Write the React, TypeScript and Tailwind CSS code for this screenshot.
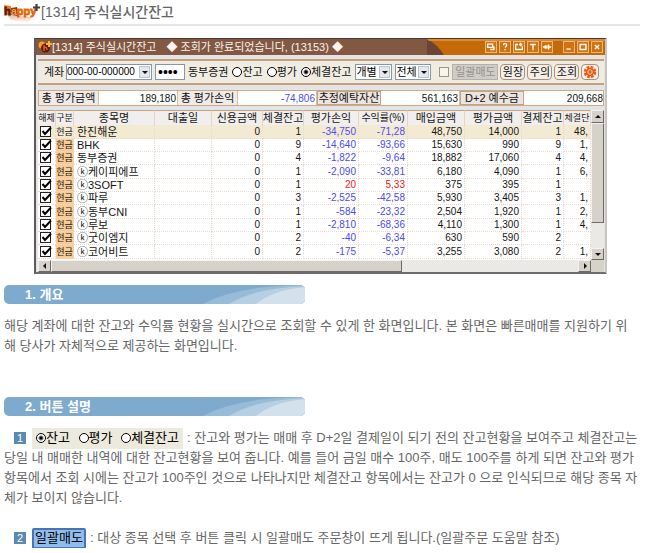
import React from 'react';

const SANS = "font-['Liberation_Sans','Noto_Sans_CJK_KR',sans-serif]";

type Row = [string, string, string, string, string, string, string, string, string];

const rows: Row[] = [
  ['한진해운', '0', '1', '-34,750', '-71,28', '48,750', '14,000', '1', '48,'],
  ['BHK', '0', '9', '-14,640', '-93,66', '15,630', '990', '9', '1,'],
  ['동부증권', '0', '4', '-1,822', '-9,64', '18,882', '17,060', '4', '4,'],
  ['ⓚ케이피에프', '0', '1', '-2,090', '-33,81', '6,180', '4,090', '1', '6,'],
  ['ⓚ3SOFT', '0', '1', '20', '5,33', '375', '395', '1', ''],
  ['ⓚ파루', '0', '3', '-2,525', '-42,58', '5,930', '3,405', '3', '1,'],
  ['ⓚ동부CNI', '0', '1', '-584', '-23,32', '2,504', '1,920', '1', '2,'],
  ['ⓚ루보', '0', '1', '-2,810', '-68,36', '4,110', '1,300', '1', '4,'],
  ['ⓚ굿이엠지', '0', '2', '-40', '-6,34', '630', '590', '2', ''],
  ['ⓚ코어비트', '0', '2', '-175', '-5,37', '3,255', '3,080', '2', '1,'],
];

const headers = ['해제', '구분', '종목명', '대출일', '신용금액', '체결잔고', '평가손익', '수익률(%)', '매입금액', '평가금액', '결제잔고', '체결단'];

function HappyLogo() {
  return (
    <svg width="37" height="24" viewBox="0 0 37 24" aria-hidden="true">
      <defs>
        <linearGradient id="hp" x1="0" y1="0" x2="0" y2="1">
          <stop offset="0" stopColor="#ff9a1c" />
          <stop offset="1" stopColor="#d95200" />
        </linearGradient>
        <linearGradient id="fade" x1="0" y1="0" x2="0" y2="1">
          <stop offset="0" stopColor="#e9b7a2" />
          <stop offset="1" stopColor="#ffffff" />
        </linearGradient>
      </defs>
      <path d="M3 15 L28 17 L24 23 L7 20 Z" fill="url(#fade)" />
      <path d="M0 5l7 1v10l-6-2z" fill="#f07d1c" />
      <path d="M7 8l6-1 1 9-7-1z" fill="#8a3a14" />
      <text x="0" y="15" fontFamily="Liberation Sans" fontWeight="700" fontSize="11" fill="#ee7410" stroke="#e06408" strokeWidth="0.8">
        <tspan fill="#5a1c10" stroke="#5a1c10">h</tspan>
        <tspan fill="#f5a05a" stroke="none">a</tspan>
        <tspan fill="url(#hp)">ppy</tspan>
      </text>
      <path d="M32.500 4v7M29 7.500h7" stroke="#4a3a34" strokeWidth="2.200" />
    </svg>
  );
}

function MiniLogo() {
  return (
    <svg width="14" height="14" viewBox="0 0 14 14" aria-hidden="true">
      <circle cx="4" cy="5" r="3.500" fill="#f9a01b" />
      <circle cx="7.500" cy="8" r="4.500" fill="#5d1c0b" />
      <path d="M6 5v6M6 8q3-2 3 2" stroke="#e8591c" strokeWidth="1.500" fill="none" />
      <path d="M11 1v6M8 4h6" stroke="#ffb02e" strokeWidth="2" />
    </svg>
  );
}

const titleIcons: { name: string; d: string }[] = [
  { name: '복사', d: 'M2 2.500h6v4H2zM5 9h4.500V5' },
  { name: '도움말', d: 'M4 4q0-2 2-2t2 2q0 1-2 2.500M6 8.500v1.500' },
  { name: '이동', d: 'M5 3H2v6h8V5M8 1v4M6 3h4' },
  { name: '글꼴', d: 'M2.500 3h7M6 3v7' },
  { name: '고정', d: 'M1 6h3M4 4v4M4 5h4M4 7h4M8 3v6M8 6h3' },
  { name: '최소화', d: 'M3 8.500h5' },
  { name: '최대화', d: 'M2.500 3h7v6h-7z' },
  { name: '닫기', d: 'M3.500 3.500l5 5M8.500 3.500l-5 5' },
];

function TitleBar() {
  return (
    <div className="relative flex h-4 items-center bg-[#825843] pr-[2px] pl-[2px] text-[11px] leading-4 text-[#fbf3ec]">
      <svg className="absolute inset-y-0 right-0 h-4 w-[178px]" viewBox="0 0 178 16" preserveAspectRatio="none" aria-hidden="true">
        <path d="M-8 0 H10 L20 16 H-8z" fill="#6b4433" />
        <path d="M0 0 Q10 5 17 16 H178 V0z" fill="#c46a08" />
        <path d="M0 0 H178 V2 H2z" fill="#d98a35" />
      </svg>
      <MiniLogo />
      <span className="whitespace-pre">[1314] 주식실시간잔고</span>
      <span className="ml-[10px] whitespace-pre">◆ 조회가 완료되었습니다, (13153) ◆</span>
      <div className="relative ml-auto flex gap-[2px]">
        {titleIcons.map((icon, i) => (
          <button key={icon.name} aria-label={icon.name} className={i === 5 ? 'ml-2 h-3 w-3 border border-[#f0b878] bg-[#cf7412]' : 'h-3 w-3 border border-[#f0b878] bg-[#cf7412]'}>
            <svg width="10" height="10" viewBox="0 0 12 12" aria-hidden="true">
              <path d={icon.d} fill="none" stroke="#fff" strokeWidth="1.600" />
            </svg>
          </button>
        ))}
      </div>
    </div>
  );
}

function Arrow({ dir }: { dir: 'up' | 'down' | 'left' | 'right' }) {
  const d = { up: 'M1 5h6L4 2z', down: 'M1 3h6L4 6z', left: 'M5 1v6L2 4z', right: 'M3 1v6l3-3z' }[dir];
  return (
    <svg width="8" height="8" viewBox="0 0 8 8" aria-hidden="true">
      <path d={d} fill="#111" />
    </svg>
  );
}

function Select({ label, value, className }: { label: string; value: string; className: string }) {
  return (
    <div className={`relative h-4 shrink-0 border border-[#8795a8] bg-white ${className}`}>
      <select aria-label={label} className="block h-[14px] w-full appearance-none bg-transparent leading-[14px] text-black">
        <option>{value}</option>
      </select>
      <span className="pointer-events-none absolute inset-y-px right-px flex w-[11px] items-center justify-center border border-[#b9c3d2] bg-[#e3e8ef]">
        <Arrow dir="down" />
      </span>
    </div>
  );
}

function Radio({ name, label, checked }: { name: string; label: string; checked?: boolean }) {
  return (
    <label className="flex shrink-0 items-center whitespace-nowrap">
      <input
        type="radio"
        name={name}
        defaultChecked={checked}
        className="size-[10px] appearance-none rounded-full border border-black bg-white checked:bg-[radial-gradient(circle,#000_1px,#fff_3px)]"
      />
      {label}
    </label>
  );
}

const toolButton = 'h-4 shrink-0 rounded-sm border border-[#a8927e] bg-[#f4efe9] leading-[14px] whitespace-nowrap';

function Toolbar() {
  return (
    <div className="mt-1 flex h-[26px] items-center border-y-2 border-[#c4a07c] bg-[#f0ece2] pl-[6px] text-[11px] text-[#111]">
      <span className="w-[22px] shrink-0 whitespace-nowrap">계좌</span>
      <Select label="계좌" value="000-00-000000" className="w-[86px] text-[10px]" />
      <input type="password" aria-label="비밀번호" defaultValue="0000" className="ml-[3px] h-4 w-[30px] shrink-0 border border-[#8795a8] bg-white pl-[2px] text-[14px] text-black" />
      <span className="ml-[3px] shrink-0 whitespace-nowrap">동부증권</span>
      <div className="ml-1 flex gap-1">
        <Radio name="kind" label="잔고" />
        <Radio name="kind" label="평가" />
        <Radio name="kind" label="체결잔고" checked />
      </div>
      <div className="ml-1 flex gap-[3px]">
        <Select label="구분" value="개별" className="w-[37px] text-[11px]" />
        <Select label="범위" value="전체" className="w-[36px] text-[11px]" />
      </div>
      <input type="checkbox" aria-label="일괄매도 선택" className="ml-2 size-[10px] shrink-0 appearance-none border border-[#9b9384] bg-[#f7f4ee]" />
      <div className="ml-[3px] flex gap-[2px]">
        <button disabled className="h-4 w-[46px] shrink-0 border border-[#b5b1aa] bg-[#cfccc6] leading-[14px] whitespace-nowrap text-[#96928c]">일괄매도</button>
        <button className={`w-[25px] ${toolButton}`}>원장</button>
        <button className={`w-[25px] ${toolButton}`}>주의</button>
        <button className={`w-[25px] ${toolButton}`}>조회</button>
        <button aria-label="설정" className={`flex w-[18px] items-center justify-center ${toolButton}`}>
          <svg width="14" height="14" viewBox="0 0 14 14" aria-hidden="true">
            <circle cx="7" cy="7" r="5" fill="none" stroke="#ee5a10" strokeWidth="2.600" strokeDasharray="2.600 1.330" />
            <circle cx="7" cy="7" r="4.200" fill="#ee5a10" />
            <circle cx="7" cy="7" r="2.200" fill="none" stroke="#ffd2a8" strokeWidth="1" />
          </svg>
        </button>
      </div>
    </div>
  );
}

function Summary() {
  const label = 'flex h-full w-[60px] shrink-0 items-center justify-center border-r border-[#d9bfa2] bg-[#f0ebe8] whitespace-nowrap';
  const value = 'flex h-full w-[79px] shrink-0 items-center justify-end border-r border-[#d9bfa2] bg-white pr-px text-[10px]';
  const button = 'h-full w-16 shrink-0 border border-[#b9a592] bg-[#ece4dd] leading-3 whitespace-nowrap';
  return (
    <div className="mt-[5px] flex h-4 items-center border border-[#d0a97f] text-[11px] text-[#111]">
      <span className={label}>총 평가금액</span>
      <span className={value}>189,180</span>
      <span className={label}>총 평가손익</span>
      <span className={`${value} text-[#4b4bf0]`}>-74,806</span>
      <button className={button}>추정예탁자산</button>
      <span className={value}>561,163</span>
      <button className={button}>D+2 예수금</button>
      <span className="flex h-full grow items-center justify-end bg-white text-[10px]">209,668</span>
    </div>
  );
}

const bevel = 'flex shrink-0 items-center justify-center border border-t-[#f4f2ee] border-l-[#f4f2ee] border-r-[#6d6a66] border-b-[#6d6a66] bg-[#d6d2ca]';

function Holdings() {
  const cell = 'border-r border-b border-dotted border-[#ead9cc] p-0 whitespace-nowrap';
  const num = `${cell} pr-[2px] text-right text-[10px]`;
  return (
    <div className="mt-[4px]">
      <div className="flex">
        <div className="h-[150px] min-w-0 grow overflow-hidden bg-white">
          <table className="w-full table-fixed border-separate border-spacing-0 text-[11px] leading-3 text-[#151515]">
            <colgroup>
              <col className="w-[18px]" />
              <col className="w-[18px]" />
              <col className="w-[81px]" />
              <col className="w-[57px]" />
              <col className="w-[51px]" />
              <col className="w-[41px]" />
              <col className="w-[55px]" />
              <col className="w-[49px]" />
              <col className="w-[57px]" />
              <col className="w-[57px]" />
              <col className="w-[42px]" />
              <col />
            </colgroup>
            <thead>
              <tr className="h-[15px]">
                {headers.map((h, i) => (
                  <th key={h} className="border-t border-r border-t-[#c9a27a] border-r-[#e6d3c4] bg-[#f1efed] p-0 font-normal whitespace-nowrap">
                    <span className={i < 2 || i > 10 ? 'flex justify-center text-[9px]' : i > 6 && i < 8 ? 'flex justify-center text-[10px]' : 'flex justify-center'}>{h}</span>
                  </th>
                ))}
              </tr>
            </thead>
            <tbody>
              {rows.map(([name, credit, filled, pl, rate, buy, evalAmt, settled, last], i) => {
                const tone = pl.startsWith('-') ? 'text-[#4b4bf0]' : 'text-[#f01818]';
                return (
                  <tr key={name} className={i === 0 ? 'h-[14px] bg-[#f3ead3]' : i % 3 === 0 ? 'h-[14px]' : 'h-[13px]'}>
                    <td className={cell}>
                      <div className="relative ml-[2px] h-3 w-3">
                        <input type="checkbox" aria-label={`${name} 선택`} defaultChecked className="peer block size-[11px] appearance-none border border-[#222] bg-white" />
                        <svg className="pointer-events-none absolute inset-0 hidden peer-checked:block" width="12" height="12" viewBox="0 0 12 12" aria-hidden="true">
                          <path d="M2.500 5l2.500 3L11 1.500" fill="none" stroke="#000" strokeWidth="2" />
                        </svg>
                      </div>
                    </td>
                    <td className={`${cell} ${i === 0 ? '' : 'bg-[#fbcb95]'} text-[9px]`}>
                      <span className="flex justify-center">현금</span>
                    </td>
                    <td className={`${cell} pl-[3px]`}>{name}</td>
                    <td className={cell} />
                    <td className={num}>{credit}</td>
                    <td className={num}>{filled}</td>
                    <td className={`${num} ${tone}`}>{pl}</td>
                    <td className={`${num} ${tone}`}>{rate}</td>
                    <td className={num}>{buy}</td>
                    <td className={num}>{evalAmt}</td>
                    <td className={num}>{settled}</td>
                    <td className={num}>{last}</td>
                  </tr>
                );
              })}
            </tbody>
          </table>
        </div>
        <div className="flex h-[150px] w-[13px] shrink-0 flex-col bg-[#ebe9e5]">
          <button aria-label="위로" className={`h-[13px] ${bevel}`}><Arrow dir="up" /></button>
          <div className={`h-[100px] ${bevel}`} />
          <button aria-label="아래로" className={`mt-auto h-3 ${bevel}`}><Arrow dir="down" /></button>
        </div>
      </div>
      <div className="flex h-3 bg-[#ebe9e5]">
        <button aria-label="왼쪽" className={`w-[13px] ${bevel}`}><Arrow dir="left" /></button>
        <div className={`w-[351px] ${bevel}`} />
        <button aria-label="오른쪽" className={`ml-auto w-[13px] ${bevel}`}><Arrow dir="right" /></button>
        <div className="w-[13px] bg-[#d6d2ca]" />
      </div>
    </div>
  );
}

function SectionHeading({ children }: { children: React.ReactNode }) {
  return (
    <h2 className="relative h-[19px] max-w-[301px] overflow-hidden rounded-[5px] bg-[#7eabcd] pl-[21px] text-[13px] leading-[19px] font-bold text-white">
      <svg className="absolute top-0 right-0" width="102" height="19" viewBox="0 0 102 19" aria-hidden="true">
        <path d="M0 19Q32 2 92 0H102V19z" fill="#98bcd8" />
        <path d="M26 19Q52 3 102 1V19z" fill="#b7cfe2" />
        <path d="M53 19Q70 5 102 2V19z" fill="#d3e1ed" />
      </svg>
      <span className="relative">{children}</span>
    </h2>
  );
}

function Badge({ n }: { n: number }) {
  return <span className="mr-[6px] flex size-3 shrink-0 items-center justify-center bg-[#5b8ab0] text-[11px] leading-3 text-white">{n}</span>;
}

export default function App() {
  return (
    <main className={`bg-white pr-[14px] pl-1 text-[#666] ${SANS}`}>
      <header className="flex h-[26px] items-center border-b-2 border-[#e6e6e6]">
        <HappyLogo />
        <h1 className="text-[14px] leading-5 font-medium whitespace-nowrap">[1314] 주식실시간잔고</h1>
      </header>

      <section aria-label="주식실시간잔고 화면" className="mt-3 ml-[30px] max-w-[573px] border-2 border-t border-t-[#4a3a32] border-r-[#c9c5be] border-b-[#6f6b68] border-l-[#5e5a58] bg-[#e4e4e6]">
        <TitleBar />
        <div className="pr-px pl-[2px]">
          <Toolbar />
          <Summary />
          <Holdings />
        </div>
      </section>

      <section className="mt-[11px]">
        <SectionHeading>1. 개요</SectionHeading>
        <p className="mt-3 text-[13px] leading-5 whitespace-nowrap">
          해당 계좌에 대한 잔고와 수익률 현황을 실시간으로 조회할 수 있게 한 화면입니다. 본 화면은 빠른매매를 지원하기 위
          <br />
          해 당사가 자체적으로 제공하는 화면입니다.
        </p>
      </section>

      <section className="mt-[41px]">
        <SectionHeading>2. 버튼 설명</SectionHeading>
        <div className="mt-3 text-[13px] leading-5 whitespace-nowrap">
          <div className="flex h-5 items-center pl-[10px]">
            <Badge n={1} />
            <span className="mr-1 flex h-[21px] w-[151px] shrink-0 items-center justify-between bg-[#ece9dd] px-1 text-black">
              <Radio name="sample" label="잔고" checked />
              <Radio name="sample" label="평가" />
              <Radio name="sample" label="체결잔고" />
            </span>
            : 잔고와 평가는 매매 후 D+2일 결제일이 되기 전의 잔고현황을 보여주고 체결잔고는
          </div>
          <p>
            당일 내 매매한 내역에 대한 잔고현황을 보여 줍니다. 예를 들어 금일 매수 100주, 매도 100주를 하게 되면 잔고와 평가
            <br />
            항목에서 조회 시에는 잔고가 100주인 것으로 나타나지만 체결잔고 항목에서는 잔고가 0 으로 인식되므로 해당 종목 자
            <br />
            체가 보이지 않습니다.
          </p>
          <div className="mt-5 flex h-5 items-center pl-[10px]">
            <Badge n={2} />
            <button className="mr-1 h-[21px] w-[54px] shrink-0 rounded-[2px] border-2 border-[#4a74ad] bg-[#90bdf0] leading-4 text-black">일괄매도</button>
            : 대상 종목 선택 후 버튼 클릭 시 일괄매도 주문창이 뜨게 됩니다.(일괄주문 도움말 참조)
          </div>
        </div>
      </section>
    </main>
  );
}
